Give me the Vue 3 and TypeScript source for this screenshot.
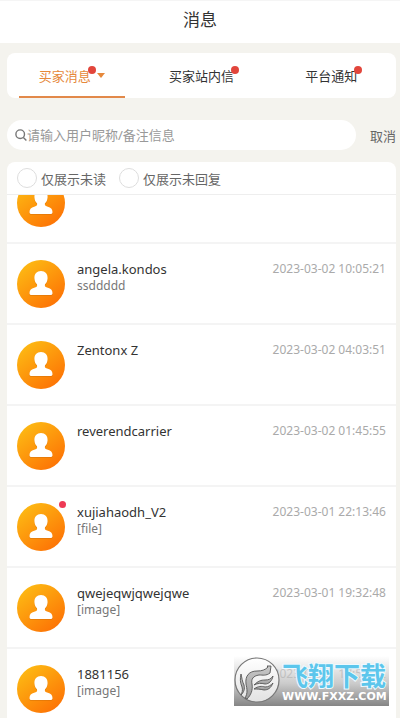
<script setup lang="ts">
import { ref } from 'vue'

interface Message {
  name: string
  preview: string
  time: string
  unread?: boolean
}

const tabs: string[] = ['买家消息', '买家站内信', '平台通知']
const active = ref(0)
const keyword = ref('')
const unreadOnly = ref(false)
const unrepliedOnly = ref(false)

const messages: Message[] = [
  { name: '', preview: '', time: '' },
  { name: 'angela.kondos', preview: 'ssddddd', time: '2023-03-02 10:05:21' },
  { name: 'Zentonx Z', preview: '', time: '2023-03-02 04:03:51' },
  { name: 'reverendcarrier', preview: '', time: '2023-03-02 01:45:55' },
  { name: 'xujiahaodh_V2', preview: '[file]', time: '2023-03-01 22:13:46', unread: true },
  { name: 'qwejeqwjqwejqwe', preview: '[image]', time: '2023-03-01 19:32:48' },
  { name: '1881156', preview: '[image]', time: '2023-03-01 17:58:12' },
]
</script>

<template>
  <div class="page">
    <header class="header"><h1>消息</h1></header>

    <main class="main">
      <nav class="tabs">
        <button
          v-for="(tab, i) in tabs"
          :key="tab"
          type="button"
          class="tab"
          :class="{ active: active === i }"
          @click="active = i"
        >
          <span class="tab-label">{{ tab }}<i class="dot"></i></span>
          <svg v-if="i === 0" class="caret" viewBox="0 0 8 5" aria-hidden="true">
            <path d="M0 0h8L4 5z" fill="currentColor" />
          </svg>
        </button>
      </nav>

      <div class="search">
        <label class="search-box">
          <svg class="search-icon" viewBox="0 0 12 12" aria-hidden="true">
            <circle cx="5.2" cy="5.2" r="4.3" />
            <path d="M8.4 8.4l3 3" />
          </svg>
          <input v-model="keyword" type="text" placeholder="请输入用户昵称/备注信息" />
        </label>
        <button type="button" class="cancel">取消</button>
      </div>

      <section class="panel">
        <div class="filters">
          <label class="filter"><input v-model="unreadOnly" type="checkbox" />仅展示未读</label>
          <label class="filter"><input v-model="unrepliedOnly" type="checkbox" />仅展示未回复</label>
        </div>

        <ul class="list">
          <li v-for="(m, i) in messages" :key="i" class="row">
            <div class="avatar">
              <svg viewBox="0 0 48 48" aria-hidden="true">
                <defs>
                  <linearGradient :id="`avatar-${i}`" x1="0.15" y1="0.1" x2="0.8" y2="0.95">
                    <stop offset="0" stop-color="#fdb813" />
                    <stop offset="1" stop-color="#fd7305" />
                  </linearGradient>
                </defs>
                <circle cx="24" cy="24" r="24" :fill="`url(#avatar-${i})`" />
                <path
                  class="person-shadow"
                  d="M24 12c4.200 0 6.800 3 6.600 7.200-.2 2.900-1.200 4.800-2.600 6.100-.6 2.300.6 2.900 2.800 3.500 3 .8 4.600 2.300 4.700 5.300 0 1.400-.7 2-2.100 2H14.600c-1.400 0-2.100-.6-2.100-2 .1-3 1.700-4.500 4.700-5.300 2.200-.6 3.400-1.200 2.800-3.500-1.400-1.300-2.400-3.200-2.600-6.100C17.200 15 19.800 12 24 12z"
                />
                <path
                  fill="#fff"
                  d="M24 11c4.200 0 6.800 3 6.600 7.200-.2 2.900-1.200 4.800-2.600 6.100-.6 2.300.6 2.900 2.800 3.500 3 .8 4.600 2.300 4.700 5.300 0 1.400-.7 2-2.100 2H14.600c-1.400 0-2.100-.6-2.100-2 .1-3 1.700-4.500 4.700-5.300 2.200-.6 3.400-1.200 2.800-3.500-1.400-1.300-2.400-3.200-2.600-6.100C17.200 14 19.800 11 24 11z"
                />
              </svg>
              <i v-if="m.unread" class="unread"></i>
            </div>
            <div class="content">
              <span class="name">{{ m.name }}</span>
              <span class="preview">{{ m.preview }}</span>
            </div>
            <time class="time">{{ m.time }}</time>
          </li>
        </ul>
      </section>
    </main>

    <div class="watermark">
      <svg class="mark-logo" viewBox="0 0 46 46" aria-hidden="true">
        <defs>
          <linearGradient id="mark-face" x1="0" y1="0" x2="0" y2="1">
            <stop offset="0" stop-color="#ffffff" />
            <stop offset="1" stop-color="#e2e2e2" />
          </linearGradient>
          <linearGradient id="mark-wing" x1="0" y1="0" x2="0" y2="1">
            <stop offset="0" stop-color="#c8c8c8" />
            <stop offset="1" stop-color="#9c9c9c" />
          </linearGradient>
        </defs>
        <circle cx="23" cy="23" r="22" fill="url(#mark-face)" stroke="#777" stroke-width="1.2" />
        <g fill="url(#mark-wing)" stroke="#555" stroke-width="0.9" stroke-linejoin="round">
          <path d="M11 41c3-5 2-9 1-14-1-8 3-13 11-13 5 0 8-1 11-4l-1-1 4 0-1 7c-4 3-7 2-11 2-6 1-8 4-7 9 1 6-1 11-5 15z" />
          <path d="M7 17c-1 5-1 8 1 13 1 3 0 6-1 8 3-3 4-6 3-10-2-4-2-7-3-11z" />
          <path d="M20 28c4-4 7-5 11-5 4 0 6-1 8-4-1 5-4 8-8 8-4-1-7-1-11 1z" />
          <path d="M20 32c4-3 8-3 11-2 4 0 6-2 8-4-2 5-5 7-9 7-4-1-7-1-10-1z" />
        </g>
      </svg>
      <div class="mark-text">
        <span class="mark-name">飞翔下载</span>
        <span class="mark-url">WWW.FXXZ.COM</span>
      </div>
    </div>
  </div>
</template>

<style>
body {
  margin: 0;
  background: #f4f3ee;
}
</style>

<style scoped>
* {
  box-sizing: border-box;
}
.page {
  position: relative;
  display: flex;
  flex-direction: column;
  height: 100vh;
  overflow: hidden;
  background: #f4f3ee;
  color: #333;
  font-family: 'Noto Sans', 'Noto Sans CJK SC', sans-serif;
  font-size: 13px;
}
button,
input {
  font: inherit;
  color: inherit;
  border: 0;
  margin: 0;
  padding: 0;
  background: none;
}
.header {
  display: flex;
  flex: none;
  align-items: center;
  justify-content: center;
  height: 43px;
  padding-bottom: 4px;
  background: #fff;
  border-top: 1px solid #f5f5f5;
}
h1 {
  margin: 0;
  font-size: 17px;
  font-weight: 400;
  line-height: 24px;
}
.main {
  display: flex;
  flex: 1;
  flex-direction: column;
  min-height: 0;
  padding: 10px 4px 0 7px;
}
.tabs {
  display: grid;
  flex: none;
  grid-template-columns: repeat(3, 1fr);
  height: 45px;
  background: #fff;
  border-radius: 8px;
}
.tab {
  display: flex;
  align-items: center;
  justify-content: center;
  gap: 6px;
  margin: 0 12px;
  border-top: 2px solid transparent;
  border-bottom: 2px solid transparent;
}
.tab.active {
  color: #e6883a;
  border-bottom-color: #e2894a;
}
.tab-label {
  position: relative;
}
.dot {
  position: absolute;
  top: 0;
  right: -5px;
  width: 8px;
  height: 8px;
  border-radius: 50%;
  background: #e2463c;
}
.caret {
  width: 8px;
  height: 5px;
}
.search {
  display: flex;
  flex: none;
  align-items: center;
  gap: 14px;
  margin-top: 22px;
}
.search-box {
  display: flex;
  flex: 1;
  align-items: center;
  min-width: 0;
  height: 30px;
  padding: 0 8px;
  background: #fff;
  border-radius: 15px;
}
.search-icon {
  flex: none;
  width: 12px;
  height: 12px;
  fill: none;
  stroke: #777;
  stroke-width: 1.4;
}
.search-box input {
  flex: 1;
  min-width: 0;
  outline: none;
}
.search-box input::placeholder {
  color: #999;
  opacity: 1;
}
.cancel {
  color: #666;
}
.panel {
  display: flex;
  flex: 1;
  flex-direction: column;
  min-height: 0;
  margin-top: 12px;
  overflow: hidden;
  background: #fff;
  border-radius: 8px 8px 0 0;
}
.filters {
  display: flex;
  flex: none;
  align-items: center;
  gap: 13px;
  height: 33px;
  padding-left: 10px;
  border-bottom: 1px solid #eee;
}
.filter {
  display: flex;
  align-items: center;
  gap: 4px;
  color: #666;
}
.filter input {
  appearance: none;
  width: 20px;
  height: 20px;
  border: 1px solid #ddd;
  border-radius: 50%;
}
.filter input:checked {
  background: #fd8f0a;
}
.list {
  flex: 1;
  min-height: 0;
  margin: 0;
  padding: 0;
  overflow: hidden;
  list-style: none;
}
.row {
  display: flex;
  height: 81px;
  padding: 16px 10px 0;
  border-bottom: 2px solid #f4f4f4;
}
.row:first-child {
  margin-top: -32px;
}
.avatar {
  position: relative;
  flex: none;
  width: 48px;
  height: 48px;
}
.avatar svg {
  display: block;
  width: 100%;
  height: 100%;
}
.person-shadow {
  fill: #c96a08;
  opacity: 0.4;
}
.unread {
  position: absolute;
  top: -2px;
  right: -1px;
  width: 7px;
  height: 7px;
  border-radius: 50%;
  background: #ee3a55;
}
.content {
  display: flex;
  flex: 1;
  flex-direction: column;
  min-width: 0;
  padding-left: 12px;
}
.name {
  font-size: 13px;
  line-height: 18px;
}
.preview {
  color: #777;
  font-size: 12px;
  line-height: 16px;
}
.time {
  color: #aaa;
  font-size: 12px;
  line-height: 18px;
}
.watermark {
  position: absolute;
  right: 11px;
  bottom: 12px;
  display: flex;
  width: 155px;
  height: 50px;
  background: linear-gradient(rgba(255, 255, 255, 0.4), rgba(190, 190, 190, 0.8) 55%, #858585);
}
.mark-logo {
  flex: none;
  width: 46px;
  height: 46px;
  margin-top: 1px;
}
.mark-text {
  display: flex;
  flex-direction: column;
  padding: 5px 0 0 2px;
}
.mark-name {
  color: #5cc6ec;
  font-family: 'Noto Sans CJK SC', sans-serif;
  font-size: 26px;
  font-weight: 700;
  line-height: 28px;
  paint-order: stroke;
  -webkit-text-stroke: 2px #eefaff;
}
.mark-url {
  color: #fff;
  font-family: 'DejaVu Sans', sans-serif;
  font-size: 11px;
  font-weight: 700;
  line-height: 15px;
}
</style>
